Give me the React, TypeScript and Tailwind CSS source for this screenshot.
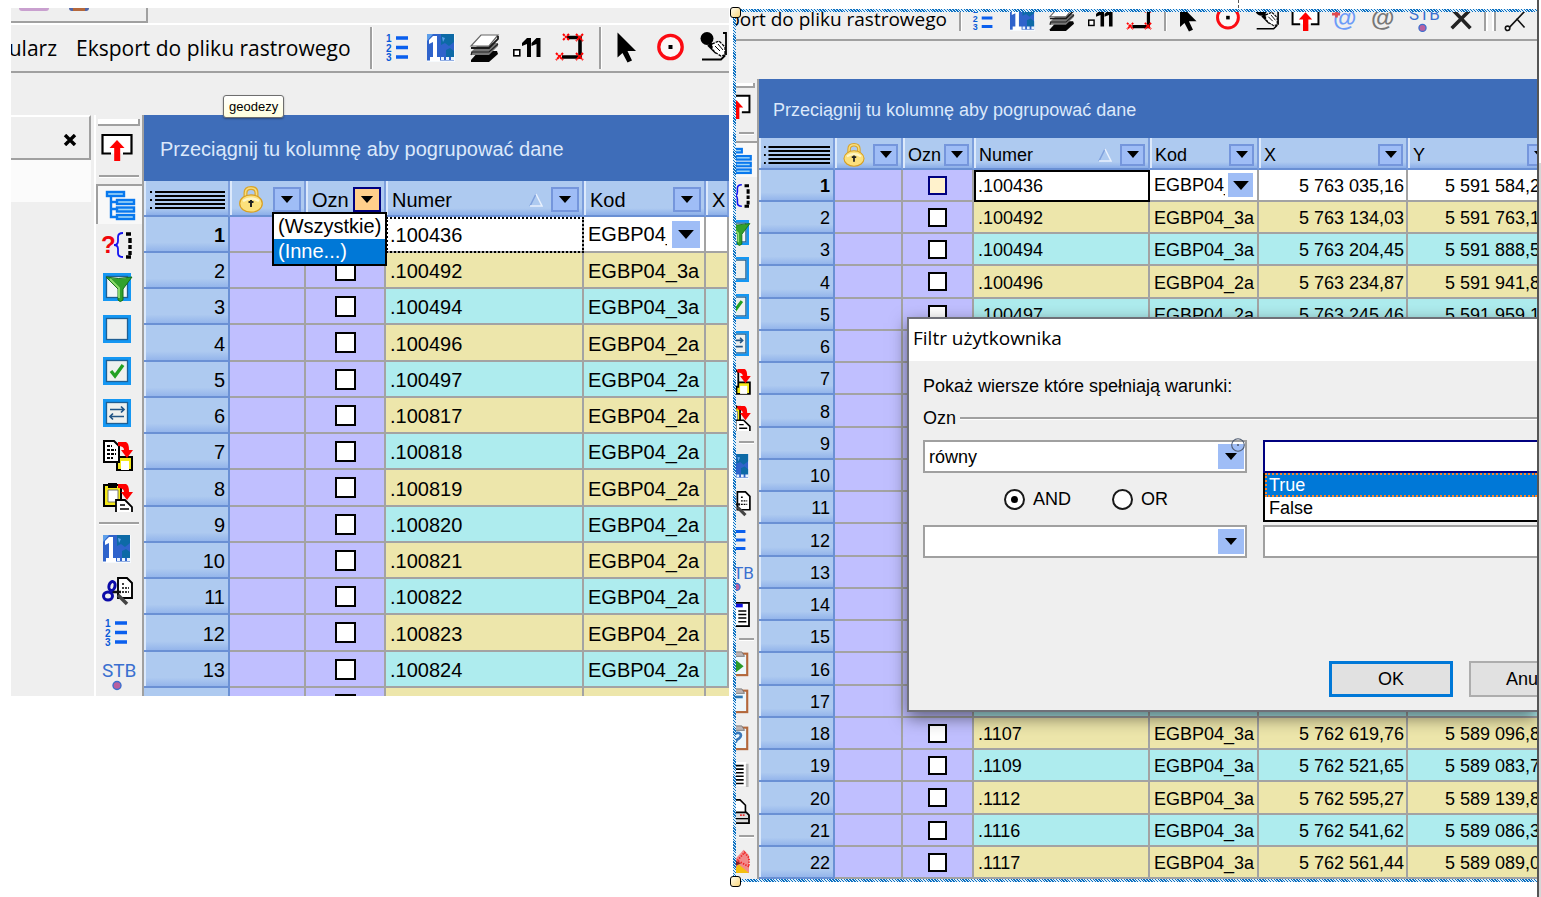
import { useState, type ReactNode } from 'react'
import clsx from 'clsx'

type Size = 'lg' | 'sm'

interface Row {
  no: number
  numer?: string
  kod?: string
  x?: string
  y?: string
}

const LEFT_ROWS: Row[] = [
  { no: 1, numer: '.100436', kod: 'EGBP04_' },
  { no: 2, numer: '.100492', kod: 'EGBP04_3a' },
  { no: 3, numer: '.100494', kod: 'EGBP04_3a' },
  { no: 4, numer: '.100496', kod: 'EGBP04_2a' },
  { no: 5, numer: '.100497', kod: 'EGBP04_2a' },
  { no: 6, numer: '.100817', kod: 'EGBP04_2a' },
  { no: 7, numer: '.100818', kod: 'EGBP04_2a' },
  { no: 8, numer: '.100819', kod: 'EGBP04_2a' },
  { no: 9, numer: '.100820', kod: 'EGBP04_2a' },
  { no: 10, numer: '.100821', kod: 'EGBP04_2a' },
  { no: 11, numer: '.100822', kod: 'EGBP04_2a' },
  { no: 12, numer: '.100823', kod: 'EGBP04_2a' },
  { no: 13, numer: '.100824', kod: 'EGBP04_2a' },
]

const RIGHT_ROWS: Row[] = [
  { no: 1, numer: '.100436', kod: 'EGBP04_', x: '5 763 035,16', y: '5 591 584,2' },
  { no: 2, numer: '.100492', kod: 'EGBP04_3a', x: '5 763 134,03', y: '5 591 763,1' },
  { no: 3, numer: '.100494', kod: 'EGBP04_3a', x: '5 763 204,45', y: '5 591 888,5' },
  { no: 4, numer: '.100496', kod: 'EGBP04_2a', x: '5 763 234,87', y: '5 591 941,8' },
  { no: 5, numer: '.100497', kod: 'EGBP04_2a', x: '5 763 245,46', y: '5 591 959,1' },
  ...Array.from({ length: 12 }, (_, i) => ({ no: i + 6 })),
  { no: 18, numer: '.1107', kod: 'EGBP04_3a', x: '5 762 619,76', y: '5 589 096,8' },
  { no: 19, numer: '.1109', kod: 'EGBP04_3a', x: '5 762 521,65', y: '5 589 083,7' },
  { no: 20, numer: '.1112', kod: 'EGBP04_3a', x: '5 762 595,27', y: '5 589 139,8' },
  { no: 21, numer: '.1116', kod: 'EGBP04_3a', x: '5 762 541,62', y: '5 589 086,3' },
  { no: 22, numer: '.1117', kod: 'EGBP04_3a', x: '5 762 561,44', y: '5 589 089,0' },
]

const GRID_FONT = "font-['Liberation_Sans',Arial,sans-serif]"
const UI_FONT = "font-['Open_Sans','Noto_Sans',sans-serif]"

/* ---------- icons, all on a 28 x 28 canvas ---------- */

function Icon({ size, children }: { size: Size; children: ReactNode }) {
  return (
    <svg
      viewBox="0 0 28 28"
      fill="none"
      aria-hidden
      className={clsx('block shrink-0 overflow-visible', size === 'lg' ? 'h-7 w-7' : 'h-[25px] w-[25px]')}
    >
      {children}
    </svg>
  )
}

const ICONS: Record<string, ReactNode> = {
  list: (
    <>
      <g fill="#0b5bd8" fontSize="10" fontWeight="700" fontFamily="Liberation Sans, sans-serif">
        <text x="2" y="8">1</text>
        <text x="2" y="17.5">2</text>
        <text x="2" y="27">3</text>
      </g>
      <path d="M12 4h12M12 13.5h12M12 23h12" stroke="#0a5fee" strokeWidth="3.4" />
    </>
  ),
  bars: <path d="M12 4h12M12 13.5h12M12 23h12" stroke="#0a5fee" strokeWidth="3.4" />,
  one: (
    <>
      <rect x="0" y="0" width="28" height="28" fill="#f6fafd" />
      <rect x="0" y="0" width="27" height="26.5" fill="#2f63cb" />
      <path d="M14 0h13v8l-5 4-4-3-4 2zM19 16l4-2 4 3v6h-8z" fill="#0d6aa6" />
      <path d="M0 0h6L0 7zM15 3l3 1-2 4z" fill="#5fa0ea" />
      <path d="M2 6l4-4h4v21h3v4H3v-4h3V8L2 10z" fill="#fff" />
      <path d="M14 24.500h3M19 24.500h3M24 24.500h3" stroke="#e8f2fc" strokeWidth="3" />
    </>
  ),
  layers: (
    <>
      <path d="M9 17h18l1 3-9 8H1v-2z" fill="#050505" />
      <path d="M10 9h18v3l-9 9H1v-3z" fill="#777" />
      <path d="M1 21l1-3h17l9-8" stroke="#222" strokeWidth="1.2" />
      <path d="M11 1h17l-9 11H1z" fill="#fff" stroke="#666" strokeWidth="1.2" />
      <path d="M28 2v3l-9 9H1" stroke="#1a1a1a" strokeWidth="1.8" />
    </>
  ),
  eleven: (
    <>
      <rect x="0.8" y="15.8" width="6" height="6" fill="#fff" stroke="#000" strokeWidth="1.6" />
      <path d="M9 9l5-5h4v19h-4V10L9 12zM18.500 9l5-5h4v19h-4V10l-5 2z" fill="#000" />
    </>
  ),
  poly: (
    <>
      <path d="M11 3.500h13V23H6" stroke="#000" strokeWidth="3.6" />
      <g stroke="#f00" strokeWidth="2" strokeDasharray="2.400 0.6">
        <path d="M7 0l6 6M13 0L7 6M20 0l7 7M27 0l-7 7M20 19l7 7M27 19l-7 7M0 19l7 7M7 19l-7 7" />
      </g>
    </>
  ),
  cursor: <path d="M4.500-1.500v25l5-4.500 5 9.500 4.500-2-4.500-9.500h8.500z" fill="#000" />,
  target: (
    <>
      <circle cx="14.500" cy="13" r="11.700" stroke="#fb0a12" strokeWidth="3.300" fill="#fbf6f6" />
      <rect x="12.500" y="11" width="4" height="4" fill="#000" />
    </>
  ),
  hand: (
    <>
      <path d="M10 10l8 8" stroke="#000" strokeWidth="5" />
      <circle cx="8" cy="4.500" r="6.500" fill="#000" />
      <path d="M13 10l7-3 6 6v8l-4 1-5-3-4-4z" fill="#fff" stroke="#000" strokeWidth="1.3" strokeDasharray="3 1" />
      <path d="M16 12l5 5M19 10l5 6" stroke="#000" strokeWidth="1" />
      <path d="M24-1h3v22M3 25.500h19l4-4" stroke="#000" strokeWidth="1.8" />
    </>
  ),
  upload: (
    <>
      <path d="M8 20.500H-0.500V2h29v18.500H20" stroke="#000" strokeWidth="2.2" fill="#fff" />
      <path d="M14 7l-7.500 8h4.700v13h6V15H21.500z" fill="#f00" />
    </>
  ),
  atBlue: (
    <>
      <text x="1" y="22" fontSize="27" fontWeight="700" fill="#6d9cf8" fontFamily="Liberation Sans, sans-serif">@</text>
      <path d="M0 9h9M5 4v9" stroke="#e04a50" strokeWidth="3" />
    </>
  ),
  atGray: <text x="0" y="22" fontSize="27" fontWeight="700" fill="#777" fontFamily="Liberation Sans, sans-serif">@</text>,
  stb: (
    <>
      <text x="-1" y="16" fontSize="19" fill="#3a6fd0" fontFamily="Liberation Sans Narrow, Roboto, sans-serif">STB</text>
      <circle cx="14" cy="24.500" r="4" fill="#b9609f" stroke="#3a6fd0" strokeWidth="1.400" />
    </>
  ),
  cross: <path d="M3 3l21 22M25 3L3 25" stroke="#222" strokeWidth="4" />,
  line: (
    <>
      <path d="M5 25L25 4M14 14l9 10" stroke="#111" strokeWidth="1.800" />
      <circle cx="4" cy="25" r="2.500" fill="#fff" stroke="#111" strokeWidth="1.800" />
    </>
  ),
  tree: (
    <g stroke="#0878ee" strokeWidth="2.400" fill="#9fd6f8">
      <path d="M7 5v21h8M7 11h8M7 18h8" fill="none" />
      <rect x="3" y="1" width="17" height="4" />
      <rect x="13" y="9" width="17" height="4" />
      <rect x="13" y="16.500" width="17" height="4" />
      <rect x="13" y="24" width="17" height="4" />
    </g>
  ),
  query: (
    <>
      <text x="-2" y="22" fontSize="24" fontWeight="700" fill="#f0050c" fontFamily="Liberation Sans, sans-serif">?</text>
      <Brace />
    </>
  ),
  brace: <Brace />,
  filter: (
    <>
      <rect x="1.500" y="1.500" width="25" height="25" fill="#f3f6f7" stroke="#1597f3" strokeWidth="3" />
      <rect x="3.500" y="3.500" width="21" height="21" stroke="#1f5f93" strokeWidth="1.300" />
      <path d="M3 4q12 3 26 0L20 16v11q-3 3-5 0V16z" fill="#32a12c" stroke="#14701a" strokeWidth="1" />
      <path d="M7 6l9 9v10" stroke="#8fdc6f" strokeWidth="1.800" />
    </>
  ),
  box: <BoxFrame />,
  check: (
    <>
      <BoxFrame />
      <path d="M8 14l4 5 8-11" stroke="#22a022" strokeWidth="3.400" />
    </>
  ),
  swap: (
    <>
      <BoxFrame />
      <path d="M7 10.500h14M18 7.500l3 3-3 3M21 17.500H7M10 14.500l-3 3 3 3" stroke="#225585" strokeWidth="1.700" />
    </>
  ),
  copy: (
    <>
      <path d="M14 16h15v13H14z" fill="#f4e91a" stroke="#000" strokeWidth="2" />
      <path d="M18 20h8v9h-8z" fill="#fff" />
      <path d="M1 0h10l5 5v16H1z" fill="#fff" stroke="#000" strokeWidth="2" />
      <path d="M4 5h5M4 9h9M4 13h9M4 17h6" stroke="#000" strokeWidth="1.800" strokeDasharray="3 1" />
      <DownArrow />
    </>
  ),
  paste: (
    <>
      <rect x="1" y="2" width="17" height="21" fill="#f4e91a" stroke="#000" strokeWidth="2" />
      <path d="M5 7h10v12H5z" fill="#fff" stroke="#777" strokeWidth="1" />
      <rect x="5" y="0" width="9" height="5" fill="#000" />
      <path d="M13 29V17h9l7 7v5" fill="#fff" stroke="#000" strokeWidth="1.800" />
      <path d="M17 22h5M17 26h9" stroke="#000" strokeWidth="1.500" />
      <DownArrow />
    </>
  ),
  cut: (
    <>
      <path d="M15 1h9l5 5v15H15z" fill="#fff" stroke="#000" strokeWidth="1.900" />
      <path d="M19 7h3M19 11h7M19 15h7" stroke="#000" strokeWidth="1.500" strokeDasharray="2 1" />
      <path d="M15 18l9 9" stroke="#444" strokeWidth="3.500" />
      <path d="M9 15h9" stroke="#111" strokeWidth="2.500" />
      <ellipse cx="9" cy="9" rx="3" ry="4.500" transform="rotate(15 9 9)" stroke="#0b0ba8" strokeWidth="3" />
      <ellipse cx="5" cy="19" rx="4.500" ry="4" stroke="#0b0ba8" strokeWidth="3" />
    </>
  ),
  table: (
    <>
      <rect x="0" y="1" width="28" height="26" fill="#fff" stroke="#000" strokeWidth="2" />
      <path d="M1 4h20" stroke="#1111e0" strokeWidth="4" />
      <path d="M4 10h9M4 14h9M4 18h9M4 22h9M16 10h9M16 14h9M16 18h9M16 22h9" stroke="#000" strokeWidth="1.700" />
    </>
  ),
  clipGo: (
    <>
      <Clipboard />
      <path d="M12 9l10 8-10 8z" fill="#2a9a28" />
    </>
  ),
  clipMinus: (
    <>
      <Clipboard />
      <path d="M10 10h11" stroke="#2f78b4" strokeWidth="3" />
    </>
  ),
  clipHelp: (
    <>
      <Clipboard />
      <path d="M11 12q1-4 6-3 4 2 0 6-4 2-4 5" stroke="#3b78b8" strokeWidth="3" />
    </>
  ),
  text: (
    <>
      <path d="M3 0h22v27H3z" fill="#fff" />
      <path d="M26 2v26" stroke="#bbb" strokeWidth="3" />
      <path d="M5 4h17M5 8h17M5 12h17M5 16h17M5 20h17M5 24h17" stroke="#000" strokeWidth="1.800" />
    </>
  ),
  print: (
    <>
      <path d="M6 15L12 1h6l6 6v8" fill="#fff" stroke="#000" strokeWidth="1.800" />
      <path d="M1 15h24l3 3v9H1z" fill="#ddd" stroke="#000" strokeWidth="2" />
      <path d="M2 22h25" stroke="#000" strokeWidth="1.500" />
      <path d="M18 18h6" stroke="#e33" strokeWidth="2" strokeDasharray="2 1" />
    </>
  ),
  map: (
    <>
      <path d="M13 28V12l9-10 6 6v20z" fill="#f28a8a" />
      <path d="M15 14l8-9 5 6v10z" stroke="#e22" strokeWidth="2" strokeDasharray="1.500 1.500" />
      <path d="M10 28l6-10 12 10z" fill="#f5bf10" />
      <path d="M11 13l8 4-8 4z" fill="#8b1f28" />
    </>
  ),
}

function Brace() {
  return (
    <>
      <path d="M20 2q-5 0-5 4v4q0 4-4 4 4 0 4 4v4q0 4 5 4" stroke="#1414f0" strokeWidth="1.800" />
      <path d="M23 3h5M27 7v5M27 14v4M27 20v4M23 26h5" stroke="#000" strokeWidth="3.400" />
    </>
  )
}

function BoxFrame() {
  return (
    <>
      <rect x="1.500" y="1.500" width="25" height="25" fill="#eef0ee" stroke="#1597f3" strokeWidth="3" />
      <rect x="3.500" y="3.500" width="21" height="21" stroke="#1f5f93" strokeWidth="1.300" />
    </>
  )
}

function DownArrow() {
  return <path d="M15 1h8q3 1 3 8h4l-6 8-6-8h3q0-4-6-4z" fill="#f00" />
}

function Clipboard() {
  return (
    <>
      <rect x="3" y="3" width="23" height="24" fill="#eef7fb" stroke="#b3683c" strokeWidth="2.400" />
      <path d="M9 1h11l3 5H7z" fill="#bdb4b4" stroke="#777" strokeWidth="1" />
    </>
  )
}

function Lock({ size }: { size: Size }) {
  return (
    <svg viewBox="0 0 24 27" fill="none" className={size === 'lg' ? 'h-[27px] w-6' : 'h-6 w-[22px]'} aria-hidden>
      <path d="M6.500 13V7q0-5 5.500-5t5.500 5v6" stroke="#d9a52a" strokeWidth="4" />
      <path d="M6.500 13V7q0-5 5.500-5t5.500 5v6" stroke="#f8dd7c" strokeWidth="1.600" />
      <ellipse cx="12" cy="17.500" rx="11.300" ry="8.700" fill="#fbe07c" stroke="#d79f22" strokeWidth="1.200" />
      <path d="M4 15q8-5 16 0" stroke="#fdf5c8" strokeWidth="2.500" />
      <path d="M12 14v7M9.500 16h5" stroke="#222" strokeWidth="2" />
    </svg>
  )
}

function Caret({ className }: { className?: string }) {
  return (
    <svg viewBox="0 0 14 8" className={clsx('block', className ?? 'h-2 w-3.5')} aria-hidden>
      <path d="M0 0h14L7 8z" fill="#000" />
    </svg>
  )
}

/* ---------- toolbars ---------- */

function ToolButton({ name, size, label }: { name: string; size: Size; label: string }) {
  return (
    <button type="button" aria-label={label} className="block shrink-0">
      <Icon size={size}>{ICONS[name]}</Icon>
    </button>
  )
}

function Divider({ size }: { size: Size }) {
  return (
    <span
      className={clsx(
        'shrink-0 border-l-2 border-[#a0a0a0] bg-white',
        size === 'lg' ? 'mr-[11px] ml-[15px] h-[42px] w-[3px]' : 'mr-[9px] ml-3 h-[37px] w-[3px]'
      )}
    />
  )
}

const VIEW_TOOLS = ['list', 'one', 'layers', 'eleven', 'poly']
const EDIT_TOOLS = ['cursor', 'target', 'hand']
const POINT_TOOLS = ['upload', 'atBlue', 'atGray', 'stb', 'cross']

function TopToolbar({ size }: { size: Size }) {
  const lg = size === 'lg'
  const gap = lg ? 'gap-[15px]' : 'gap-3.5'
  return (
    <div
      className={clsx(
        'flex overflow-hidden border-b-2 border-[#a0a0a0] text-black',
        UI_FONT,
        lg ? 'h-12 items-center text-[21px] leading-7' : 'h-[29px] items-end pb-2 text-[19px] leading-[23px]'
      )}
    >
      {lg && (
        <button type="button" className="flex w-[46px] shrink-0 justify-end overflow-hidden">
          Formularz
        </button>
      )}
      <button
        type="button"
        className={clsx('flex shrink-0 overflow-hidden whitespace-nowrap', lg ? 'ml-[19px] w-[279px]' : 'w-[211px] justify-end')}
      >
        Eksport do pliku rastrowego
      </button>
      <div className={clsx('flex shrink-0', lg ? 'items-center' : 'items-end')}>
        <Divider size={size} />
        <div className={clsx('flex', gap)}>
          {VIEW_TOOLS.map((t) => (
            <ToolButton key={t} name={t} size={size} label={t} />
          ))}
        </div>
        <Divider size={size} />
        <div className={clsx('flex', gap)}>
          {[...EDIT_TOOLS, ...(lg ? [] : POINT_TOOLS)].map((t) => (
            <ToolButton key={t} name={t} size={size} label={t} />
          ))}
        </div>
        {!lg && (
          <>
            <span className="ml-2.5 h-[37px] w-1 shrink-0 border-l-2 border-[#a0a0a0] bg-white" />
            <span className="mr-2 ml-1 h-[30px] w-1 shrink-0 border-r-2 border-[#a0a0a0] bg-white" />
            <ToolButton name="line" size={size} label="line" />
          </>
        )}
      </div>
    </div>
  )
}

const SIDE_GROUPS: string[][] = [
  ['query', 'filter', 'box', 'check', 'swap', 'copy', 'paste'],
  ['one', 'cut', 'list', 'stb'],
]
const SIDE_GROUPS_LONG: string[][] = [
  ['brace', 'filter', 'box', 'check', 'swap', 'copy', 'paste'],
  ['one', 'cut', 'bars', 'stb', 'table'],
  ['clipGo', 'clipMinus', 'clipHelp', 'text', 'print'],
  ['map'],
]

function SideSeparator({ className }: { className: string }) {
  return (
    <div className={clsx('flex w-full flex-col justify-center', className)}>
      <div className="mx-[3px] h-[3px] border-t-2 border-[#a0a0a0] bg-white" />
    </div>
  )
}

function SideToolbar({ size }: { size: Size }) {
  const lg = size === 'lg'
  const cell = clsx('flex w-full shrink-0 items-center', lg ? 'h-[42px] justify-center pr-1' : 'h-[37px] justify-end pr-2')
  const groups = lg ? SIDE_GROUPS : SIDE_GROUPS_LONG
  return (
    <div
      className={clsx(
        'flex shrink-0 flex-col overflow-hidden border-r-2 border-r-[#a0a0a0]',
        lg ? 'ml-[3px] w-[50px] border-l-2 border-l-white' : 'w-[23px]'
      )}
    >
      <div className={clsx('shrink-0 pt-1', lg ? 'h-[11px] px-0.5' : 'h-[9px] pr-0.5')}>
        <div className="h-full border-r-2 border-b-2 border-[#a0a0a0] bg-white" />
      </div>
      <div className={cell}>
        <ToolButton name="upload" size={size} label="upload" />
      </div>
      <SideSeparator className="h-4 shrink-0" />
      <div
        className={clsx(
          'flex w-full shrink-0 items-center border-t-2 border-[#a0a0a0] bg-[#f8f8f8]',
          lg ? 'h-10 justify-center border-l-2 pr-1' : 'h-9 justify-end pr-2'
        )}
      >
        <ToolButton name="tree" size={size} label="tree" />
      </div>
      {groups.map((group, g) => (
        <div key={g}>
          {g > 0 && <SideSeparator className={lg ? 'h-2.5' : 'h-3'} />}
          {group.map((t) => (
            <div key={t} className={cell}>
              <ToolButton name={t} size={size} label={t} />
            </div>
          ))}
        </div>
      ))}
    </div>
  )
}

/* ---------- data grid ---------- */

function FilterButton({ size, active, label }: { size: Size; active?: boolean; label: string }) {
  return (
    <button
      type="button"
      aria-label={label}
      className={clsx(
        'flex shrink-0 items-center justify-center border-2',
        size === 'lg' ? 'h-[25px] w-7' : 'h-[22px] w-[25px]',
        active ? 'border-[#00007f] bg-[#ffcf8b]' : 'border-[#7596dc] bg-[#9fbdf6]'
      )}
    >
      <Caret className={size === 'lg' ? 'h-[7px] w-3.5' : 'h-[7px] w-3'} />
    </button>
  )
}

function HeaderCell({ size, children }: { size: Size; children?: ReactNode }) {
  return (
    <th className="border-r-2 border-b-2 border-r-[#7d9fdd] border-b-[#6a90d4] bg-[linear-gradient(to_bottom,#aecaf0_80%,#8cafe9)] p-0 font-normal shadow-[inset_2px_0_0_#dce9fb]">
      <div className={clsx('flex items-center pt-[3px] pr-[3px]', size === 'lg' ? 'pl-1.5' : 'pl-[5px]')}>{children}</div>
    </th>
  )
}

function SortMark() {
  return (
    <svg viewBox="0 0 14 14" className="mr-2 ml-auto h-3.5 w-3.5" fill="none" aria-hidden>
      <path d="M7 1L1 13" stroke="#7fa0dc" strokeWidth="1.500" />
      <path d="M7 1l6 12H1" stroke="#e8f0fd" strokeWidth="1.500" />
    </svg>
  )
}

function GridRow({ row, size }: { row: Row; size: Size }) {
  const lg = size === 'lg'
  const first = row.no === 1
  const band = first ? 'bg-white' : row.no % 2 === 0 ? 'bg-[#ede6ab]' : 'bg-[#aeecee]'
  const line = 'border-r-2 border-b-2 border-[#a3a3a3]'
  const tall = row.no % 4 === 0
  const height = lg ? (tall ? 'h-[37px]' : 'h-9') : tall ? 'h-[33px]' : 'h-8'
  return (
    <tr className={height}>
      <th
        scope="row"
        className={clsx(
          'border-r-2 border-b-2 border-[#6a90d4] bg-[linear-gradient(to_bottom,#aecaf0_75%,#94b5eb)] pt-0.5 pr-[3px] text-right shadow-[inset_2px_0_0_#dce9fb]',
          first ? 'font-bold' : 'font-normal'
        )}
      >
        {row.no}
      </th>
      <td className={clsx(line, 'bg-[#c0bfff] p-0')} />
      <td className={clsx(line, 'bg-[#c0bfff] p-0')}>
        <input
          type="checkbox"
          aria-label={`Ozn ${row.no}`}
          className={clsx(
            'mx-auto block appearance-none border-2',
            lg ? 'size-[21px]' : 'size-[19px]',
            first && !lg ? 'border-[#00007f] bg-[#fff2cc]' : 'border-black bg-white'
          )}
        />
      </td>
      <td
        className={clsx(
          line,
          band,
          'pt-0.5 pl-1',
          first && (lg ? 'outline-2 -outline-offset-2 outline-black outline-dotted' : 'outline-2 -outline-offset-2 outline-black')
        )}
      >
        {row.numer}
      </td>
      <td className={clsx(line, band, 'pl-1', !first && 'pt-0.5')}>
        {first ? (
          <div className="flex items-center overflow-hidden pr-1">
            <span className={clsx('overflow-hidden', lg ? 'w-[79px]' : 'w-[71px]')}>{row.kod}</span>
            <button
              type="button"
              aria-label="Kod"
              className={clsx('ml-auto flex shrink-0 items-center justify-center bg-[#9fbdf6]', lg ? 'h-[27px] w-7' : 'h-6 w-[25px]')}
            >
              <Caret className="h-[9px] w-4" />
            </button>
          </div>
        ) : (
          row.kod
        )}
      </td>
      <td className={clsx(line, band, 'pt-0.5 pr-0.5 text-right')}>{row.x}</td>
      {!lg && <td className={clsx(line, band, 'pt-0.5 pl-[37px]')}>{row.y}</td>}
    </tr>
  )
}

function DataGrid({ size, rows }: { size: Size; rows: Row[] }) {
  const lg = size === 'lg'
  return (
    <div className={clsx('min-w-0 flex-1 overflow-hidden', GRID_FONT, lg ? 'text-[20px] leading-[26px]' : 'text-[18px] leading-6')}>
      <div className={clsx('flex items-center bg-[#3e6db9] pt-0.5 text-[#dbe8fb]', lg ? 'h-[66px] pl-4' : 'h-[59px] pl-3.5')}>
        <p className="whitespace-nowrap">Przeciągnij tu kolumnę aby pogrupować dane</p>
      </div>
      <table
        className={clsx('table-fixed border-separate border-spacing-0 text-left whitespace-nowrap text-black', lg ? 'w-full' : 'w-[798px]')}
      >
        <colgroup>
          <col className={lg ? 'w-[86px]' : 'w-[76px]'} />
          <col className={lg ? 'w-[76px]' : 'w-[68px]'} />
          <col className={lg ? 'w-20' : 'w-[71px]'} />
          <col className={lg ? 'w-[198px]' : 'w-44'} />
          <col className={lg ? 'w-[122px]' : 'w-[109px]'} />
          <col className={lg ? undefined : 'w-[149px]'} />
          {!lg && <col className="w-[149px]" />}
        </colgroup>
        <thead>
          <tr className={lg ? 'h-9' : 'h-8'}>
            <HeaderCell size={size}>
              <svg viewBox="0 0 74 18" className="block h-[18px] w-full" preserveAspectRatio="none" aria-hidden>
                <path d="M5 1h69M5 5h69M5 9h69M5 13h69M5 17h69" stroke="#000" strokeWidth="1.800" />
                <path d="M0 1h2M0 9h2M0 17h2" stroke="#000" strokeWidth="2" />
              </svg>
            </HeaderCell>
            <HeaderCell size={size}>
              <div className="flex w-full items-center justify-between pl-[3px]">
                <Lock size={size} />
                <FilterButton size={size} label="Filtr blokady" />
              </div>
            </HeaderCell>
            <HeaderCell size={size}>
              <span>Ozn</span>
              <span className="ml-auto">
                <FilterButton size={size} active={lg} label="Filtr Ozn" />
              </span>
            </HeaderCell>
            <HeaderCell size={size}>
              <span>Numer</span>
              <SortMark />
              <FilterButton size={size} label="Filtr Numer" />
            </HeaderCell>
            <HeaderCell size={size}>
              <span>Kod</span>
              <span className="ml-auto">
                <FilterButton size={size} label="Filtr Kod" />
              </span>
            </HeaderCell>
            <HeaderCell size={size}>
              <span>X</span>
              {!lg && (
                <span className="ml-auto">
                  <FilterButton size={size} label="Filtr X" />
                </span>
              )}
            </HeaderCell>
            {!lg && (
              <HeaderCell size={size}>
                <span>Y</span>
                <span className="ml-auto">
                  <FilterButton size={size} label="Filtr Y" />
                </span>
              </HeaderCell>
            )}
          </tr>
        </thead>
        <tbody>
          {rows.map((row) => (
            <GridRow key={row.no} row={row} size={size} />
          ))}
        </tbody>
      </table>
      {lg && (
        // the next row, of which only the top edge shows
        <div className="flex h-2">
          <div className="w-[86px] border-r-2 border-[#6a90d4] bg-[#aecaf0]" />
          <div className="w-[76px] border-r-2 border-[#a3a3a3] bg-[#c0bfff]" />
          <div className="flex w-20 items-end justify-center border-r-2 border-[#a3a3a3] bg-[#c0bfff]">
            <div className="h-0.5 w-[21px] bg-black" />
          </div>
          <div className="w-[198px] border-r-2 border-[#a3a3a3] bg-[#ede6ab]" />
          <div className="w-[122px] border-r-2 border-[#a3a3a3] bg-[#ede6ab]" />
          <div className="flex-1 bg-[#ede6ab]" />
        </div>
      )}
    </div>
  )
}

/* ---------- custom filter dialog ---------- */

function Combo({ label, options, children }: { label: string; options: string[]; children?: ReactNode }) {
  return (
    <div className="relative flex h-[33px] border-2 border-[#a0a0a0] bg-white p-0.5 pr-[1px]">
      <select aria-label={label} className="min-w-0 flex-1 appearance-none bg-transparent pl-0.5 outline-none">
        {options.map((o) => (
          <option key={o}>{o}</option>
        ))}
      </select>
      <span className="pointer-events-none flex w-[26px] items-center justify-center bg-[#9fbdf6]">
        <Caret className="h-[7px] w-3" />
      </span>
      {children}
    </div>
  )
}

function Radio({ label, checked, onChange }: { label: string; checked: boolean; onChange: () => void }) {
  return (
    <label className="flex items-center gap-2">
      <span className="flex size-[21px] items-center justify-center rounded-full border-2 border-[#1a1a1a] bg-white">
        <input type="radio" name="joint" checked={checked} onChange={onChange} className="size-[7px] appearance-none rounded-full checked:bg-black" />
      </span>
      {label}
    </label>
  )
}

function FilterDialog() {
  const [joint, setJoint] = useState<'AND' | 'OR'>('AND')
  return (
    <div
      role="dialog"
      aria-labelledby="filter-title"
      className={clsx(
        'absolute top-[305px] right-0 left-[171px] h-[395px] overflow-hidden border-2 border-r-0 border-[#6f7078] bg-[#efefef] text-[18px] leading-6 whitespace-nowrap text-black shadow-[0_6px_16px_rgba(0,0,0,0.5)]',
        GRID_FONT
      )}
    >
      <h2 id="filter-title" className={clsx('h-[42px] bg-white pt-[7px] pl-1 text-[19px] leading-6', UI_FONT)}>
        Filtr użytkownika
      </h2>
      <div className="pt-[13px] pl-3.5">
        <p>Pokaż wiersze które spełniają warunki:</p>
        <div className="mt-2 flex items-center gap-1">
          <span>Ozn</span>
          <span className="h-[3px] flex-1 border-t-2 border-[#a0a0a0] bg-white" />
        </div>
        <div className="mt-2.5 grid grid-cols-[324px_1fr] gap-x-4">
          <Combo label="Warunek 1" options={['równy']}>
            <svg viewBox="0 0 14 14" className="absolute -top-1 right-0 h-3.5 w-3.5" fill="none" aria-hidden>
              <circle cx="7" cy="7" r="6.300" stroke="#4d5a70" strokeWidth="1.100" />
              <circle cx="7" cy="7" r="1" fill="#4d5a70" />
            </svg>
          </Combo>
          <div className="relative">
            <input aria-label="Wartość 1" className="block h-[33px] w-full border-2 border-r-0 border-[#00007f] bg-white outline-none" />
            <ul role="listbox" className="absolute inset-x-0 top-[33px] border-b-2 border-l-2 border-black bg-white leading-[23px]">
              <li
                role="option"
                aria-selected="true"
                className="border-y-2 border-l-2 border-dotted border-[#ff8728] bg-[#0078d7] pl-0.5 leading-5 text-white"
              >
                True
              </li>
              <li role="option" aria-selected="false" className="pl-1">
                False
              </li>
            </ul>
          </div>
        </div>
        <div className="flex h-[52px] items-center gap-[41px] pl-[81px]">
          <Radio label="AND" checked={joint === 'AND'} onChange={() => setJoint('AND')} />
          <Radio label="OR" checked={joint === 'OR'} onChange={() => setJoint('OR')} />
        </div>
        <div className="grid grid-cols-[324px_1fr] gap-x-4">
          <Combo label="Warunek 2" options={['']} />
          <input aria-label="Wartość 2" className="block h-[33px] w-full border-2 border-r-0 border-[#a0a0a0] bg-white outline-none" />
        </div>
        <div className="mt-[103px] -mr-14 flex justify-end gap-4">
          <button type="button" className="h-9 w-[124px] border-[3px] border-[#0078d7] bg-[#e1e1e1]">
            OK
          </button>
          <button type="button" className="h-9 w-[124px] border-2 border-[#adadad] bg-[#e1e1e1]">
            Anuluj
          </button>
        </div>
      </div>
    </div>
  )
}

function OznFilterMenu() {
  return (
    <ul
      role="listbox"
      className={clsx(
        'absolute top-[204px] left-[261px] w-[115px] border-2 border-black bg-white text-[20px] leading-[25px] whitespace-nowrap',
        GRID_FONT
      )}
    >
      <li role="option" aria-selected="false" className="pl-1">
        (Wszystkie)
      </li>
      <li role="option" aria-selected="true" className="bg-[#0078d7] pl-1 text-white">
        (Inne...)
      </li>
    </ul>
  )
}

function Handle({ className }: { className: string }) {
  return (
    <span
      className={clsx('absolute -left-[3px] size-[11px] rounded-[3px] border border-black bg-[linear-gradient(135deg,#fffdf0,#fbd77c)]', className)}
    />
  )
}

export default function App() {
  return (
    <main className="flex min-h-screen items-start overflow-hidden bg-white pl-[11px]">
      <section className="relative mt-2 min-w-0 flex-[718] bg-[#efefef]">
        <div className="h-[15px] w-[137px] overflow-hidden border-r-2 border-b-2 border-[#a0a0a0]">
          <div className="flex items-start gap-5 pl-2">
            <span className="h-[3px] w-[30px] rounded-b bg-[#c9a0cf]" />
            <span className="h-[3px] w-5 rounded-b-full border-x-4 border-[#5267a8] bg-[#b5683c]" />
          </div>
        </div>
        <div className="h-0.5 bg-white" />
        <TopToolbar size="lg" />
        <div className="h-[42px]" />
        <div className="flex items-start">
          <div className="w-20 shrink-0">
            <div className="flex h-[45px] items-center justify-end border-t-2 border-r-2 border-b-2 border-t-white border-r-[#a0a0a0] border-b-[#a0a0a0] pt-1 pr-3">
              <button type="button" aria-label="Zamknij">
                <svg viewBox="0 0 14 12" className="h-3 w-3.5" aria-hidden>
                  <path d="M2 1l10 10M12 1L2 11" stroke="#000" strokeWidth="3.400" />
                </svg>
              </button>
            </div>
            <div className="h-[42px] bg-[#fbfbfb]" />
          </div>
          <SideToolbar size="lg" />
          <DataGrid size="lg" rows={LEFT_ROWS} />
        </div>
        <div
          role="tooltip"
          className="absolute top-[87px] left-[212px] rounded-[3px] border border-[#6e6e6e] bg-[linear-gradient(#fff,#ffffdc)] px-[5px] text-[13px] leading-[21px] text-black shadow-[0_1px_2px_rgba(0,0,0,0.35)] font-['Liberation_Sans',Arial,sans-serif]"
        >
          geodezy
        </div>
        <OznFilterMenu />
      </section>

      <section className="relative mt-[9px] ml-1 min-w-0 flex-[804]">
        <div className="bg-[repeating-linear-gradient(45deg,#0b6fc0_0_1px,#dff0fc_1px_2px)] py-[3px] pl-[3px]">
          <div className="relative overflow-hidden bg-[#efefef]">
            <TopToolbar size="sm" />
            <div className="h-[38px]" />
            <div className="flex">
              <SideToolbar size="sm" />
              <DataGrid size="sm" rows={RIGHT_ROWS} />
            </div>
            <FilterDialog />
          </div>
        </div>
        <Handle className="-top-0.5" />
        <Handle className="-bottom-[5px]" />
        <span className="absolute -top-[9px] left-[505px] h-2 border-l border-dashed border-[#555]" />
      </section>

      <div className="flex min-h-screen w-1 shrink-0 flex-col self-stretch border-l-2 border-[#555]">
        <div className="h-[163px] bg-white" />
        <div className="flex-1 bg-[#d6d6d6]" />
      </div>
    </main>
  )
}
